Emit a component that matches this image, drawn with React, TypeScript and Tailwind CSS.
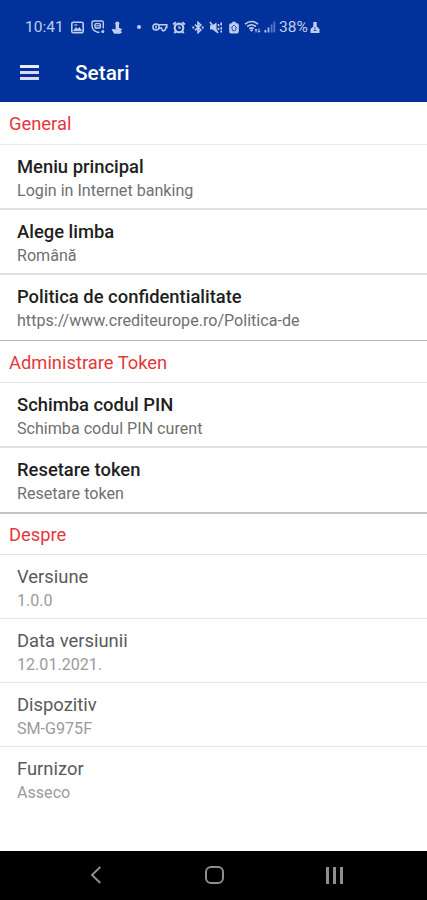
import React from 'react';

interface Item {
  title: string;
  value: string;
  row: string;
}

interface Section {
  name: string;
  head: string;
  titleClass: string;
  valueClass: string;
  items: Item[];
}

const sections: Section[] = [
  {
    name: 'General',
    head: 'h-[43px] border-b border-[#e9e9e9]',
    titleClass: 'font-medium text-[#1f1f1f]',
    valueClass: 'text-[#707070]',
    items: [
      { title: 'Meniu principal', value: 'Login in Internet banking', row: 'h-[65px] border-b-2 border-[#e1e1e1]' },
      { title: 'Alege limba', value: 'Română', row: 'h-[65px] border-b-2 border-[#e1e1e1]' },
      { title: 'Politica de confidentialitate', value: 'https://www.crediteurope.ro/Politica-de', row: 'h-[66px] border-b border-[#b8b8b8]' },
    ],
  },
  {
    name: 'Administrare Token',
    head: 'h-[42px] border-b border-[#e3e3e3]',
    titleClass: 'font-medium text-[#1f1f1f]',
    valueClass: 'text-[#707070]',
    items: [
      { title: 'Schimba codul PIN', value: 'Schimba codul PIN curent', row: 'h-[65px] border-b-2 border-[#e1e1e1]' },
      { title: 'Resetare token', value: 'Resetare token', row: 'h-[66px] border-b-2 border-[#c4c4c4]' },
    ],
  },
  {
    name: 'Despre',
    head: 'h-[41px] border-b border-[#e3e3e3]',
    titleClass: 'text-[#5a5a5a]',
    valueClass: 'text-[#9b9b9b]',
    items: [
      { title: 'Versiune', value: '1.0.0', row: 'h-[64px] border-b border-[#e6e6e6]' },
      { title: 'Data versiunii', value: '12.01.2021.', row: 'h-[64px] border-b border-[#e6e6e6]' },
      { title: 'Dispozitiv', value: 'SM-G975F', row: 'h-[64px] border-b border-[#e6e6e6]' },
      { title: 'Furnizor', value: 'Asseco', row: 'h-[64px]' },
    ],
  },
];

const StatusIcons = () => (
  <>
    <svg className="ml-[8px]" width="13" height="13" viewBox="0 0 13 13" fill="none" stroke="currentColor" strokeWidth="1.6">
      <rect x="0.8" y="1.3" width="11.4" height="10.4" rx="1.5" />
      <path d="M2.5 9.8 5 6.6l1.8 1.8 1.6-1.8 2.2 3.2z" fill="currentColor" strokeWidth="0.9" />
      <path d="M3.3 4h3" strokeWidth="1.2" />
    </svg>
    <svg className="ml-[7px]" width="14" height="14" viewBox="0 0 14 14" fill="none" stroke="currentColor" strokeWidth="1.4">
      <path d="M8.5 12.2H6.4C3 11.200 1 9 1 5.500V2.600Q1 1 2.600 1h8.200Q12.300 1 12.300 2.600v6" />
      <rect x="4" y="3.600" width="5.400" height="4.400" rx="1" />
      <path d="M4.500 5.800h4.500" strokeWidth="1" />
      <circle cx="11.800" cy="11.600" r="1.500" fill="currentColor" stroke="none" />
    </svg>
    <svg className="ml-[6px]" width="12" height="13" viewBox="0 0 12 13" fill="currentColor">
      <circle cx="6.300" cy="2.600" r="2.100" />
      <path d="M4.600 3.500h3.400v3.200l3.200 1.500L9.600 9.900l1.600 1.300-2.200 1.500H3.200L0.600 8.500l2.200-.8 1.800 1z" />
    </svg>
    <span className="ml-[14px] size-[4px] rounded-full bg-current" />
    <svg className="ml-[11px]" width="16" height="12" viewBox="0 0 16 12" fill="none" stroke="currentColor" strokeWidth="1.500">
      <circle cx="4" cy="6" r="3.100" />
      <path d="M4 4.500v3" strokeWidth="1.500" />
      <path d="M7 3.800h7.800v2.700h-1q-.3 3.300-2.300 3.300Q10 9.800 9.500 7H7" />
    </svg>
    <svg className="ml-[4px]" width="14" height="13" viewBox="0 0 13 13" fill="none" stroke="currentColor">
      <circle cx="6.500" cy="6.900" r="4.300" strokeWidth="2.100" />
      <path d="M6.500 4.500v2.700h2" strokeWidth="1.200" />
      <path d="M.7 3.500 3.300 1.200M9.700 1.200l2.600 2.300M3.200 10.500l-1.400 1.700M9.800 10.500l1.400 1.700" strokeWidth="2" />
    </svg>
    <svg className="ml-[6px]" width="12" height="13" viewBox="0 0 12 13" fill="none" stroke="currentColor" strokeWidth="1.600">
      <path d="M3 3.700 8.800 9 6 11.600V1.400L8.800 4 3 9.300" />
      <path d="M.3 6.500h2M9.700 6.500h2" strokeWidth="2" />
    </svg>
    <svg className="ml-[5px]" width="14" height="13" viewBox="0 0 14 13" fill="none" stroke="currentColor">
      <path d="M1 4.300h2.500L7.500 1.500v10L3.500 8.500H1z" fill="currentColor" stroke="none" />
      <path d="M1 1 9 12" strokeWidth="1.600" />
      <path d="M9.500 3v2.200M9.500 6.700v2.300M12.200 1.500v3M12.200 6v2.500M12.200 9.600v1.900" strokeWidth="1.600" />
    </svg>
    <svg className="ml-[6px]" width="10" height="13" viewBox="0 0 10 13" fill="currentColor">
      <path d="M3.200.8h3.600v1.400H8Q9.800 2.200 9.800 3.900v6.800Q9.800 12.400 8 12.400H2Q.2 12.400.2 10.700V3.900Q.2 2.200 2 2.200h1.200z" />
      <path d="M5 4 2.300 6.700h1v3h3.400v-3h1z" fill="none" stroke="#01319b" strokeWidth="0.700" />
    </svg>
    <svg className="ml-[5px]" width="18" height="14" viewBox="0 0 18 14" fill="none" stroke="currentColor" strokeWidth="1.600">
      <path d="M1 4.200Q7.500 -1.200 14 4.200M3.200 6.500q4.300-3.400 8.600 0M5.300 8.700q2.200-1.700 4.400 0" />
      <path d="m7.500 11.600-1.500-1.800h3z" fill="currentColor" strokeWidth="0.500" />
      <path d="M12 12.500V9.200M15 8.500v3.600M10.800 10.300l1.200-1.300 1.200 1.300M13.800 11l1.200 1.300 1.200-1.300" strokeWidth="1" />
    </svg>
    <svg className="ml-[2px]" width="12" height="12" viewBox="0 0 12 12" fill="currentColor">
      <rect x="0.500" y="9" width="1.800" height="2.500" />
      <rect x="3.600" y="6.500" width="1.800" height="5" opacity=".85" />
      <rect x="6.700" y="3.500" width="1.800" height="8" opacity=".45" />
      <rect x="9.400" y="0.500" width="1.800" height="11" opacity=".45" />
    </svg>
  </>
);

const App: React.FC = () => {
  return (
    <div className="flex h-[900px] w-[427px] flex-col overflow-hidden bg-white font-['Roboto',sans-serif]">
      <header className="h-[102px] shrink-0 bg-[#01319b]">
        {/* Status bar */}
        <div className="flex h-[54px] items-center pl-[25px] text-[#c0ceee]">
          <span className="w-[38px] pt-[2px] text-[15.500px] whitespace-nowrap">10:41</span>
          <StatusIcons />
          <span className="ml-[3px] w-[30px] pt-px text-[15.500px] whitespace-nowrap">38%</span>
          <svg className="ml-px" width="10" height="13" viewBox="0 0 10 13" fill="currentColor">
            <path d="M3.300 1h3.400v4.500L9.500 8v4H.5V8l2.800-2.500z" />
            <path d="M5 6v2.500M3.500 9.500h3" stroke="#01319b" strokeWidth="0.800" />
          </svg>
        </div>
        {/* App bar */}
        <div className="flex h-[38px] items-center pl-[20px]">
          <div className="mb-px flex w-[19px] flex-col gap-[3px]">
            <span className="h-[3px] bg-[#e8ebfa]" />
            <span className="h-[3px] bg-[#e0d8f2]" />
            <span className="h-[3px] bg-[#e0d8f2]" />
          </div>
          <h1 className="ml-[36px] pt-px text-[20.800px] font-medium text-white">Setari</h1>
        </div>
      </header>

      <main className="flex-1">
        {sections.map(section => (
          <section key={section.name}>
            <h2 className={`flex items-center pt-[2px] pl-[9px] text-[18.350px] text-[#e5383b] ${section.head}`}>{section.name}</h2>
            {section.items.map(item => (
              <div key={item.title} className={`pt-[10px] pl-[17px] ${item.row}`}>
                <div className={`text-[18.400px] leading-[24px] ${section.titleClass}`}>{item.title}</div>
                <div className={`text-[16.100px] leading-[23px] ${section.valueClass}`}>{item.value}</div>
              </div>
            ))}
          </section>
        ))}
      </main>

      <nav className="flex h-[49px] shrink-0 items-center bg-black pb-px text-[#8f8f8f]">
        <svg className="ml-[90px]" width="12" height="18" viewBox="0 0 12 18" fill="none" stroke="currentColor" strokeWidth="1.900">
          <path d="M10.300 1 2 9l8.300 8" />
        </svg>
        <div className="ml-[103px] h-[18px] w-[19px] rounded-[6px] border-2 border-current" />
        <div className="ml-[102px] flex h-[17px] gap-[4px]">
          <span className="w-[3px] bg-current" />
          <span className="w-[3px] bg-current" />
          <span className="w-[3px] bg-current" />
        </div>
      </nav>
    </div>
  );
};

export default App;
